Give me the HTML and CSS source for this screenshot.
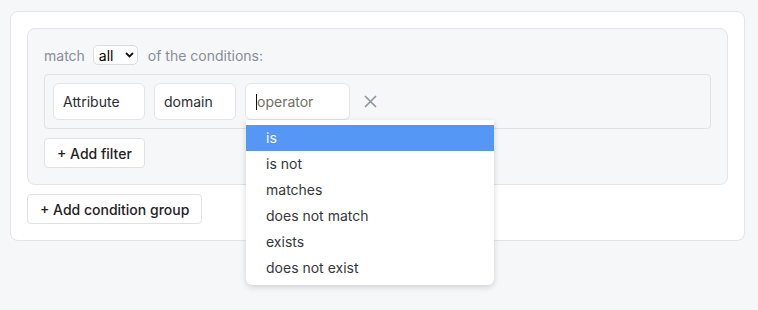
FILE: index.html
```html
<!DOCTYPE html>
<html lang="en">
<head>
    <meta charset="UTF-8">
    <title>Conditions</title>
    <link rel="stylesheet" href="styles.css">
</head>
<body>
    <div class="card">
        <div class="group">
            <div class="match-row">
                <span>match</span>
                <span class="select-wrap">
                    <select class="match-select">
                        <option selected>all</option>
                        <option>any</option>
                    </select>
                    <svg class="chevron" width="9" height="6" viewBox="0 0 9 6"><path d="M1 1l3.5 3.5L8 1" fill="none" stroke="#111" stroke-width="1.8"/></svg>
                </span>
                <span>of the conditions:</span>
            </div>

            <div class="filter-row">
                <div class="field">Attribute</div>
                <div class="field">domain</div>
                <div class="field field-op">
                    <span class="caret"></span><span class="placeholder">operator</span>
                    <ul class="menu">
                        <li class="active">is</li>
                        <li>is not</li>
                        <li>matches</li>
                        <li>does not match</li>
                        <li>exists</li>
                        <li>does not exist</li>
                    </ul>
                </div>
                <button class="remove" title="Remove">
                    <svg width="13" height="13" viewBox="0 0 13 13"><path d="M1 1l11 11M12 1L1 12" stroke="#8c919b" stroke-width="1.6" fill="none"/></svg>
                </button>
            </div>

            <button class="btn btn-filter">+ Add filter</button>
        </div>

        <button class="btn">+ Add condition group</button>
    </div>
</body>
</html>
```

FILE: styles.css
```css
html {
    height: 100%;
}
body {
    margin: 0;
    min-height: 100%;
    box-sizing: border-box;
    padding: 11px 0 0 10px;
    background: #f6f7f9;
    font-family: Inter, "Noto Sans", sans-serif;
    font-size: 14px;
    color: #2b2d31;
}
.card {
    width: 735px;
    box-sizing: border-box;
    background: #fff;
    border: 1px solid #e2e4e8;
    border-radius: 8px;
    padding: 16px;
}
.group {
    background: #f6f7f9;
    border: 1px solid #e2e4e8;
    border-radius: 8px;
    padding: 15px 16px 16px;
    margin-bottom: 9px;
}
.match-row {
    display: flex;
    align-items: center;
    gap: 8px;
    height: 22px;
    color: #878d98;
    margin-bottom: 8px;
}
.select-wrap {
    position: relative;
    display: inline-flex;
    margin-right: 2px;
}
.match-select {
    appearance: none;
    -webkit-appearance: none;
    width: 45px;
    height: 20px;
    padding: 0 0 0 5px;
    border: 1px solid #d9dce1;
    border-radius: 5px;
    background: #fff;
    font-family: inherit;
    font-size: 14px;
    color: #000;
}
.chevron {
    position: absolute;
    right: 4px;
    top: 7px;
    pointer-events: none;
}
.filter-row {
    display: flex;
    align-items: center;
    gap: 9px;
    border: 1px solid #dfe1e5;
    border-radius: 4px;
    padding: 8px;
    margin-bottom: 9px;
}
.field {
    height: 37px;
    box-sizing: border-box;
    display: flex;
    align-items: center;
    padding: 0 9px;
    background: #fff;
    border: 1px solid #e2e4e8;
    border-radius: 6px;
    color: #2b2d31;
}
.field:nth-child(1) { width: 92px; }
.field:nth-child(2) { width: 82px; }
.field-op {
    position: relative;
    width: 105px;
    padding-left: 10px;
}
.caret {
    width: 1px;
    height: 16px;
    background: #111;
}
.placeholder {
    color: #6f7064;
}
.menu {
    position: absolute;
    top: 36px;
    left: 0;
    width: 248px;
    margin: 0;
    padding: 5px 0 4px;
    list-style: none;
    background: #fff;
    border-radius: 0 0 6px 6px;
    box-shadow: 0 2px 6px rgba(0, 0, 0, 0.16);
    z-index: 2;
}
.menu li {
    height: 26px;
    line-height: 26px;
    padding-left: 20px;
    color: #363739;
}
.menu li.active {
    background: #5597f4;
    color: #fff;
}
.remove {
    border: none;
    background: none;
    padding: 0;
    margin-left: 5px;
    display: flex;
    cursor: pointer;
}
.btn {
    height: 30px;
    padding: 0 12px;
    background: #fff;
    border: 1px solid #dfe1e5;
    border-radius: 4px;
    font-family: inherit;
    font-size: 14px;
    font-weight: 500;
    color: #1f2125;
    cursor: pointer;
}
.btn-filter {
    display: block;
}
```
